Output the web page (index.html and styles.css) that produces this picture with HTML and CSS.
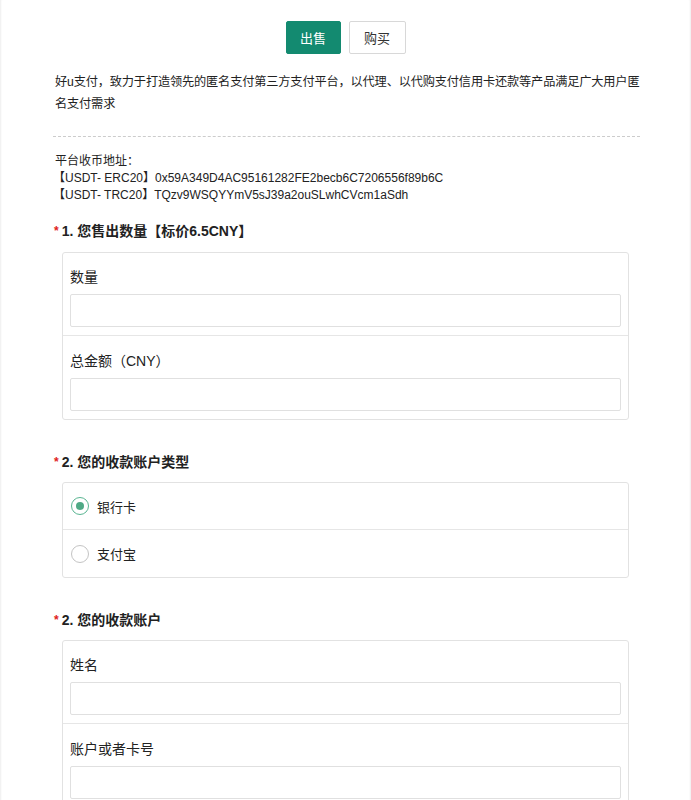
FILE: index.html
```html
<!DOCTYPE html>
<html>
<head>
    <meta charset="UTF-8">
    <title>好u支付</title>
    <link rel="stylesheet" href="styles.css">
</head>
<body>
    <div class="page">
        <!-- sell / buy switch -->
        <div class="tabs">
            <button type="button" class="tab tab-on">出售</button>
            <button type="button" class="tab">购买</button>
        </div>

        <p class="intro">好u支付，致力于打造领先的匿名支付第三方支付平台，以代理、以代购支付信用卡还款等产品满足广大用户匿名支付需求</p>

        <div class="addr">
            <div>平台收币地址：</div>
            <div>【USDT- ERC20】0x59A349D4AC95161282FE2becb6C7206556f89b6C</div>
            <div>【USDT- TRC20】TQzv9WSQYYmV5sJ39a2ouSLwhCVcm1aSdh</div>
        </div>

        <form>
            <div class="question">
                <div class="q-title"><span class="req">*</span>1. 您售出数量【标价6.5CNY】</div>
                <div class="card">
                    <div class="field">
                        <label>数量</label>
                        <input type="text">
                    </div>
                    <div class="field">
                        <label>总金额（CNY）</label>
                        <input type="text">
                    </div>
                </div>
            </div>

            <div class="question">
                <div class="q-title"><span class="req">*</span>2. 您的收款账户类型</div>
                <div class="card card-tight">
                    <label class="option"><span class="radio radio-on"></span>银行卡</label>
                    <label class="option"><span class="radio"></span>支付宝</label>
                </div>
            </div>

            <div class="question">
                <div class="q-title"><span class="req">*</span>2. 您的收款账户</div>
                <div class="card card-tight">
                    <div class="field">
                        <label>姓名</label>
                        <input type="text">
                    </div>
                    <div class="field">
                        <label>账户或者卡号</label>
                        <input type="text">
                    </div>
                </div>
            </div>
        </form>
    </div>
</body>
</html>
```

FILE: styles.css
```css
body {
    margin: 0;
    background-color: #ffffff;
    color: #222222;
    font-family: "Liberation Sans", "Noto Sans CJK SC", sans-serif;
    box-shadow: inset 2px 0 2px -1px #eeeeee, inset -2px 0 2px -1px #eeeeee;
    min-height: 100vh;
}
.page {
    width: 587px;
    margin-left: 53px;
    padding-top: 21px;
}
.tabs {
    display: flex;
    justify-content: center;
    gap: 8px;
    padding-right: 2px;
}
.tab {
    height: 33px;
    width: 57px;
    border: 1px solid #d8d8d8;
    border-radius: 2px;
    background-color: #ffffff;
    color: #333333;
    font-family: inherit;
    font-size: 13px;
    padding: 0;
}
.tab-on {
    width: 55px;
    background-color: #138a70;
    border-color: #138a70;
    color: #ffffff;
}
.intro {
    margin: 17px 0 0;
    padding: 0 0 0 2px;
    font-size: 12.2px;
    letter-spacing: -0.15px;
    line-height: 22px;
}
.addr {
    border-top: 1px dashed #cccccc;
    margin-top: 21px;
    padding: 16px 0 0;
    font-size: 12px;
    line-height: 17px;
}
.addr div:first-child {
    padding-left: 2px;
}
.question {
    margin-top: 17px;
}
.question + .question {
    margin-top: 32px;
}
.q-title {
    font-size: 14px;
    font-weight: bold;
    line-height: 20px;
    padding-left: 1px;
}
.req {
    color: #e02020;
    font-size: 12px;
    margin-right: 3px;
    vertical-align: top;
}
.card {
    margin: 11px 11px 0 9px;
    border: 1px solid #e2e2e2;
    border-radius: 3px;
}
.card-tight {
    margin-top: 10px;
}
.field {
    padding: 14px 7px 8px 7px;
    display: flex;
    flex-direction: column;
    gap: 7px;
}
.field + .field {
    border-top: 1px solid #e6e6e6;
    padding-top: 15px;
}
.field label {
    font-size: 14px;
    line-height: 20px;
}
.field input {
    height: 33px;
    box-sizing: border-box;
    border: 1px solid #e0e0e0;
    border-radius: 2px;
    font-size: 14px;
    padding: 0 8px;
}
.option {
    display: flex;
    align-items: center;
    height: 46px;
    padding-left: 8px;
    font-size: 13px;
}
.option + .option {
    border-top: 1px solid #e6e6e6;
    height: 47px;
}
.radio {
    width: 16px;
    height: 16px;
    border: 1px solid #c4c4c4;
    border-radius: 50%;
    margin-right: 8px;
    display: flex;
    align-items: center;
    justify-content: center;
}
.radio-on {
    border-color: #5ab592;
}
.radio-on::after {
    content: "";
    width: 8px;
    height: 8px;
    border-radius: 50%;
    background-color: #4fa985;
}
```
